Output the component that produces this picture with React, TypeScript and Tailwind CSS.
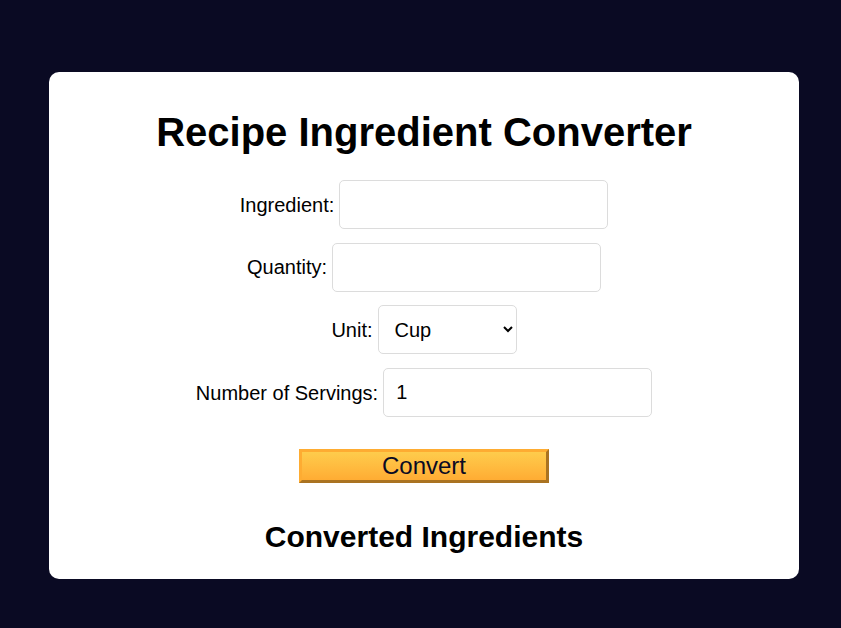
import { useState } from 'react';

const UNITS = ['Cup', 'Tablespoon', 'Teaspoon', 'Gram', 'Ounce'];

export default function App() {
  const [ingredient, setIngredient] = useState('');
  const [quantity, setQuantity] = useState('');
  const [unit, setUnit] = useState('Cup');
  const [servings, setServings] = useState('1');

  const inputCls =
    'h-[49px] rounded-[5px] border border-[#dcdcdc] bg-white px-3 text-[20px] text-black outline-none';

  return (
    <div className="min-h-screen bg-[#0a0a23] pl-[49px] pt-[72px] font-['Liberation_Sans',Arial,sans-serif] text-black">
      <div className="flex w-[750px] flex-col items-center rounded-[10px] bg-white pb-[25px] pt-[37px]">
        <h1 className="text-[40px] font-bold leading-[46px]">Recipe Ingredient Converter</h1>

        {/* Form */}
        <div className="mt-[25px] flex flex-col items-center gap-[13.7px] text-[20px]">
          <div className="flex items-center gap-[5px]">
            <label>Ingredient:</label>
            <input className={`${inputCls} w-[269px]`} value={ingredient} onChange={e => setIngredient(e.target.value)} />
          </div>
          <div className="flex items-center gap-[5px]">
            <label>Quantity:</label>
            <input className={`${inputCls} w-[269px]`} value={quantity} onChange={e => setQuantity(e.target.value)} />
          </div>
          <div className="flex items-center gap-[5px]">
            <label>Unit:</label>
            <select className={`${inputCls} w-[139px]`} value={unit} onChange={e => setUnit(e.target.value)}>
              {UNITS.map(u => <option key={u}>{u}</option>)}
            </select>
          </div>
          <div className="flex items-center gap-[5px]">
            <label>Number of Servings:</label>
            <input className={`${inputCls} w-[269px]`} value={servings} onChange={e => setServings(e.target.value)} />
          </div>
        </div>

        <button className="mt-[32px] h-[34px] w-[250px] border-[3px] border-[#feac32] bg-gradient-to-b from-[#fecc4c] to-[#ffac33] text-[24px] leading-[28px] text-[#0a0a23] [border-style:outset]">
          Convert
        </button>

        <h2 className="mt-[37px] text-[30px] font-bold leading-[34px]">Converted Ingredients</h2>
      </div>
    </div>
  );
}
